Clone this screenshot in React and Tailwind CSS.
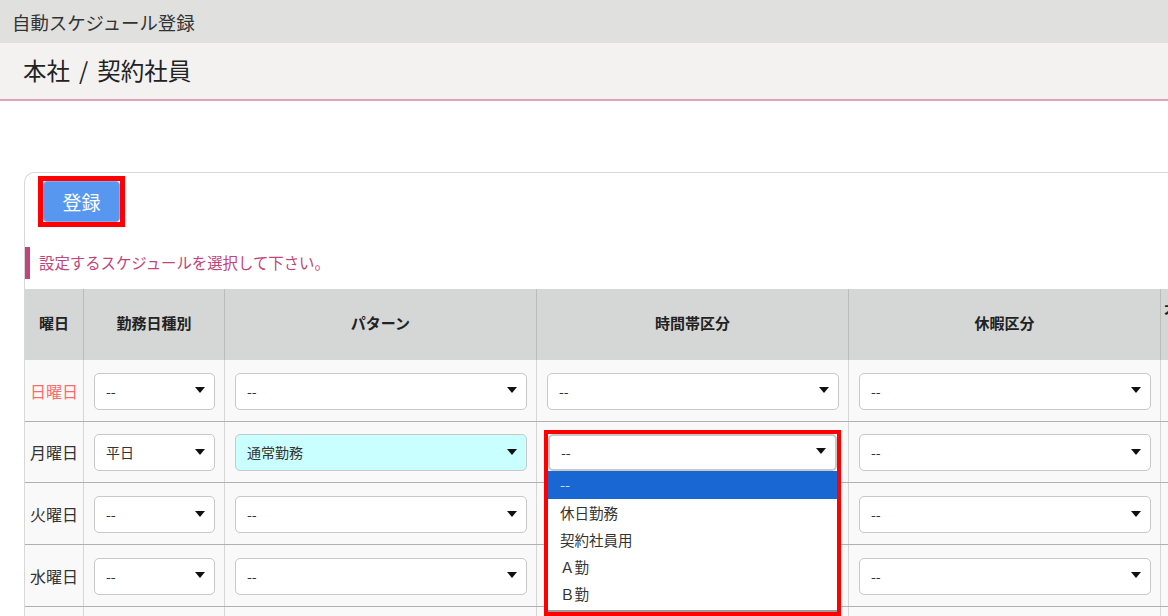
import React from 'react';

const rows = [
  { day: '日曜日', dayClass: 'text-[#ff6b6b]', type: '--', pattern: '--' },
  { day: '月曜日', dayClass: 'text-[#333]', type: '平日', pattern: '通常勤務', open: true },
  { day: '火曜日', dayClass: 'text-[#333]', type: '--', pattern: '--' },
  { day: '水曜日', dayClass: 'text-[#333]', type: '--', pattern: '--' },
];

const options = ['休日勤務', '契約社員用', 'Ａ勤', 'Ｂ勤'];

const Select = ({ value, className = '' }) => (
  <div className={`flex h-[37px] w-full items-center justify-between rounded-[5px] border border-[#c8c8c8] pl-[11px] pr-[9px] text-[14px] text-[#333] ${className}`}>
    <span>{value}</span>
    <span className="mb-[2px] h-0 w-0 border-x-[5px] border-t-[6px] border-x-transparent border-t-[#111]"></span>
  </div>
);

const Th = ({ children, className = '' }) => (
  <div className={`flex items-center justify-center border-r border-[#b9bcba] pb-[2px] text-[15px] font-bold text-[#222] ${className}`}>
    {children}
  </div>
);

const Cell = ({ children }) => (
  <div className="flex items-center border-r border-[#d6d6d6] pl-[10px] pr-[9px] pt-[2px]">{children}</div>
);

const cols = 'grid grid-cols-[59px_141px_312px_312px_312px_160px]';

export default function App() {
  return (
    <div className="h-[616px] w-[1168px] overflow-hidden bg-white font-['Noto_Sans_CJK_JP','Liberation_Sans',sans-serif]">
      <div className="flex h-[43px] items-center bg-[#e0e0de] pl-3 pt-[2px] text-[18.4px] text-[#333]">自動スケジュール登録</div>
      <div className="flex h-[58px] items-center border-b-2 border-[#dca3bb] bg-[#f3f2f1] pl-[23px] text-[23.5px] text-[#222]">
        本社<span className="mx-[9px]">/</span>契約社員
      </div>

      <div className="ml-6 mt-[71px] w-[1300px] rounded-tl-[10px] border-l border-t border-[#d8d8d8]">
        <div className="ml-[13px] mt-[3px] w-fit border-[5px] border-[#f00]">
          <button className="block h-[41px] w-[77px] rounded-[4px] border border-[#7fadf0] bg-[#5797f0] pt-[1px] text-[19px] text-white">登録</button>
        </div>
        <div className="mt-[20px] flex h-[32px] items-center border-l-[5px] border-[#c2447a] pl-[9px] text-[15.4px] text-[#c2447a]">
          設定するスケジュールを選択して下さい。
        </div>
        <div className={`${cols} mt-[10px] h-[71px] bg-[#d5d7d6]`}>
          <Th>曜日</Th>
          <Th>勤務日種別</Th>
          <Th>パターン</Th>
          <Th>時間帯区分</Th>
          <Th>休暇区分</Th>
          <Th className="!items-start !justify-start pl-[3px] pt-[11px]">不</Th>
        </div>
        {rows.map((row) => (
          <div key={row.day} className={`${cols} h-[61.67px] border-b border-[#b0b0b0] bg-[#f9f9f9]`}>
            <div className={`flex items-center justify-center border-r border-[#d6d6d6] pt-[1px] text-[16px] ${row.dayClass}`}>{row.day}</div>
            <Cell><Select value={row.type} className="bg-white" /></Cell>
            <Cell><Select value={row.pattern} className={row.pattern === '--' ? 'bg-white' : 'bg-[#c9ffff]'} /></Cell>
            <Cell>
              {row.open ? (
                <div className="relative h-[37px] w-full">
                  <div className="absolute left-[-3px] right-[-2px] top-[-4.5px] z-10 flex h-[186px] flex-col border-[4px] border-[#f00] bg-white">
                    <Select value="--" className="shrink-0 border-2 border-[#111] bg-white" />
                    <div className="flex h-[28px] shrink-0 items-center bg-[#1967d2] pl-[12px] text-[14.5px] text-[#c9dcf7]">--</div>
                    {options.map((o) => (
                      <div key={o} className="flex h-[27px] shrink-0 items-center pl-[12px] text-[14.5px] text-[#333]">{o}</div>
                    ))}
                    <div className="mt-auto border-b-2 border-[#9a9a9a]"></div>
                  </div>
                </div>
              ) : (
                <Select value="--" className="bg-white" />
              )}
            </Cell>
            <Cell><Select value="--" className="bg-white" /></Cell>
            <div></div>
          </div>
        ))}
        {/* next row, only its cell borders are in view */}
        <div className={`${cols} h-[61.67px] bg-[#f9f9f9]`}>
          <div className="border-r border-[#d6d6d6]"></div>
          <div className="border-r border-[#d6d6d6]"></div>
          <div className="border-r border-[#d6d6d6]"></div>
          <div className="border-r border-[#d6d6d6]"></div>
          <div className="border-r border-[#d6d6d6]"></div>
          <div></div>
        </div>
      </div>
    </div>
  );
}
